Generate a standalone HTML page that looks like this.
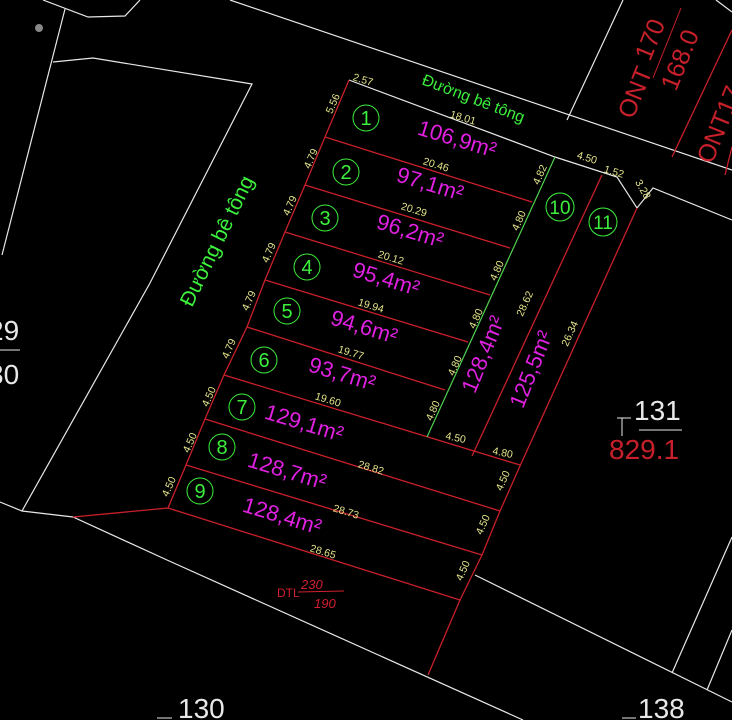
<!DOCTYPE html>
<html><head><meta charset="utf-8"><style>
html,body{margin:0;padding:0;background:#000;width:732px;height:720px;overflow:hidden}
svg{display:block}
text{font-family:"Liberation Sans",sans-serif}
.w{stroke:#e8e8e8;stroke-width:1.2;fill:none}
.r{stroke:#c8202a;stroke-width:1.3;fill:none}
.g{fill:#3cf03c}
.m{fill:#e020e0;font-size:22px}
.y{fill:#e4e48a;font-size:10.5px}
.c{stroke:#3cf03c;stroke-width:1;fill:none}
.n{fill:#3cf03c;font-size:20px;text-anchor:middle}
</style></head><body>
<svg width="732" height="720" viewBox="0 0 732 720" xmlns="http://www.w3.org/2000/svg">
<polyline class="w" points="43,0 88,17 125,16 140,0"/>
<line class="w" x1="65" y1="9" x2="2" y2="255"/>
<circle cx="39" cy="28" r="4" fill="#888"/>
<polyline class="w" points="53,62 93,58 252,84 150,283 22,511"/>
<polyline class="w" points="0,502 22,511 73,517 167,560 523,720"/>
<line class="w" x1="230" y1="0" x2="732" y2="170"/>
<polyline class="w" points="349,80 555,157 617,177 637,208 653,188 732,220"/>
<line class="w" x1="623" y1="0" x2="567" y2="120"/>
<line class="w" x1="475" y1="575" x2="732" y2="702"/>
<line class="w" x1="732" y1="537" x2="672" y2="673"/>
<line class="w" x1="732" y1="630" x2="707" y2="690"/>
<line class="w" x1="716" y1="0" x2="732" y2="12"/>
<polyline class="r" points="349,80 325,137 305,185 285,232 265,280 247,327 224,375 205,419 186,465 168,508 73,517"/>
<line class="r" x1="325" y1="137" x2="532" y2="202"/>
<line class="r" x1="305" y1="185" x2="510" y2="248"/>
<line class="r" x1="285" y1="232" x2="490" y2="295"/>
<line class="r" x1="265" y1="280" x2="468" y2="342"/>
<line class="r" x1="247" y1="327" x2="445" y2="390"/>
<line class="r" x1="224" y1="375" x2="520" y2="465"/>
<line class="r" x1="205" y1="419" x2="500" y2="511"/>
<line class="r" x1="186" y1="465" x2="482" y2="555"/>
<line class="r" x1="168" y1="508" x2="460" y2="600"/>
<line class="r" x1="602" y1="175" x2="472" y2="456"/>
<polyline class="r" points="637,208 520,466 500,511 482,555 460,600 428,675"/>
<line x1="555" y1="157" x2="427" y2="437" stroke="#50d050" stroke-width="1.2"/>
<line class="r" x1="732" y1="30" x2="672" y2="157"/>
<line class="r" x1="732" y1="147" x2="725" y2="175"/>
<g>
<circle class="c" cx="366" cy="118" r="13"/><text class="n" x="366" y="125">1</text>
<circle class="c" cx="346" cy="172" r="13"/><text class="n" x="346" y="179">2</text>
<circle class="c" cx="325" cy="218" r="13"/><text class="n" x="325" y="225">3</text>
<circle class="c" cx="307" cy="267" r="13"/><text class="n" x="307" y="274">4</text>
<circle class="c" cx="287" cy="311" r="13"/><text class="n" x="287" y="318">5</text>
<circle class="c" cx="264" cy="360" r="13"/><text class="n" x="264" y="367">6</text>
<circle class="c" cx="242" cy="407" r="13"/><text class="n" x="242" y="414">7</text>
<circle class="c" cx="222" cy="447" r="13"/><text class="n" x="222" y="454">8</text>
<circle class="c" cx="200" cy="491" r="13"/><text class="n" x="200" y="498">9</text>
<circle class="c" cx="560" cy="207" r="14"/><text class="n" x="560" y="214" style="font-size:19px">10</text>
<circle class="c" cx="603" cy="222" r="14"/><text class="n" x="603" y="229" style="font-size:19px">11</text>
</g>
<g text-anchor="middle">
<text class="m" transform="translate(455,146) rotate(17)">106,9m²</text>
<text class="m" transform="translate(428,191) rotate(17)">97,1m²</text>
<text class="m" transform="translate(408,238) rotate(17)">96,2m²</text>
<text class="m" transform="translate(384,286) rotate(17)">95,4m²</text>
<text class="m" transform="translate(362,334) rotate(17)">94,6m²</text>
<text class="m" transform="translate(340,381) rotate(17)">93,7m²</text>
<text class="m" transform="translate(302,430) rotate(17)">129,1m²</text>
<text class="m" transform="translate(285,478) rotate(17)">128,7m²</text>
<text class="m" transform="translate(280,523) rotate(17)">128,4m²</text>
<text class="m" transform="translate(490,357) rotate(-68)">128,4m²</text>
<text class="m" transform="translate(538,372) rotate(-68)">125,5m²</text>
</g>
<text class="g" style="font-size:16px" transform="translate(421,84) rotate(21)">Đường bê tông</text>
<text class="g" style="font-size:21px" transform="translate(192,308) rotate(-64)">Đường bê tông</text>
<g text-anchor="middle">
<text class="y" transform="translate(362,83) rotate(17)">2.57</text>
<text class="y" transform="translate(462,121) rotate(17)">18.01</text>
<text class="y" transform="translate(435,168) rotate(17)">20.46</text>
<text class="y" transform="translate(413,213) rotate(17)">20.29</text>
<text class="y" transform="translate(390,261) rotate(17)">20.12</text>
<text class="y" transform="translate(370,309) rotate(17)">19.94</text>
<text class="y" transform="translate(350,356) rotate(17)">19.77</text>
<text class="y" transform="translate(327,403) rotate(17)">19.60</text>
<text class="y" transform="translate(370,471) rotate(17)">28.82</text>
<text class="y" transform="translate(345,515) rotate(17)">28.73</text>
<text class="y" transform="translate(322,555) rotate(17)">28.65</text>
<text class="y" transform="translate(455,441) rotate(12)">4.50</text>
<text class="y" transform="translate(502,456) rotate(12)">4.80</text>
<text class="y" transform="translate(586,161) rotate(17)">4.50</text>
<text class="y" transform="translate(613,175) rotate(17)">1.52</text>
<text class="y" transform="translate(640,191) rotate(60)">3.28</text>
<text class="y" transform="translate(336,105) rotate(-66)">5.56</text>
<text class="y" transform="translate(314,160) rotate(-66)">4.79</text>
<text class="y" transform="translate(293,207) rotate(-66)">4.79</text>
<text class="y" transform="translate(272,254) rotate(-66)">4.79</text>
<text class="y" transform="translate(252,302) rotate(-66)">4.79</text>
<text class="y" transform="translate(232,350) rotate(-66)">4.79</text>
<text class="y" transform="translate(212,398) rotate(-66)">4.50</text>
<text class="y" transform="translate(193,444) rotate(-66)">4.50</text>
<text class="y" transform="translate(172,488) rotate(-66)">4.50</text>
<text class="y" transform="translate(543,176) rotate(-66)">4.82</text>
<text class="y" transform="translate(522,222) rotate(-66)">4.80</text>
<text class="y" transform="translate(500,272) rotate(-66)">4.80</text>
<text class="y" transform="translate(479,320) rotate(-66)">4.80</text>
<text class="y" transform="translate(458,367) rotate(-66)">4.80</text>
<text class="y" transform="translate(436,412) rotate(-66)">4.80</text>
<text class="y" transform="translate(528,305) rotate(-66)">28.62</text>
<text class="y" transform="translate(573,335) rotate(-66)">26.34</text>
<text class="y" transform="translate(506,482) rotate(-66)">4.50</text>
<text class="y" transform="translate(486,526) rotate(-66)">4.50</text>
<text class="y" transform="translate(466,572) rotate(-66)">4.50</text>
</g>
<text x="277" y="597" fill="#d02030" style="font-size:12px">DTL</text>
<text x="301" y="589" fill="#d02030" style="font-size:13px;font-style:italic">230</text>
<line x1="298" y1="592" x2="344" y2="591" stroke="#d02030" stroke-width="1"/>
<text x="314" y="608" fill="#d02030" style="font-size:13px;font-style:italic">190</text>
<g fill="#c8202a" style="font-size:25px">
<text transform="translate(633,120) rotate(-68)">ONT</text>
<text transform="translate(650,62) rotate(-68)">170</text>
<text transform="translate(676,92) rotate(-68)">168.0</text>
<text transform="translate(712,165) rotate(-68)">ONT17</text>
</g>
<line x1="653" y1="78" x2="681" y2="8" stroke="#c8202a" stroke-width="1"/>
<g fill="#e8e8e8" style="font-size:28px">
<text x="634" y="420">131</text>
<line x1="639" y1="430" x2="682" y2="430" stroke="#e8e8e8"/>
<line x1="617" y1="418" x2="631" y2="418" stroke="#e8e8e8"/>
<line x1="622" y1="418" x2="622" y2="436" stroke="#e8e8e8"/>
<text x="178" y="718">130</text>
<text x="638" y="718">138</text>
<line x1="157" y1="718" x2="172" y2="718" stroke="#e8e8e8"/>
<line x1="622" y1="718" x2="636" y2="718" stroke="#e8e8e8"/>
<text x="-12" y="340">29</text>
<line x1="0" y1="350" x2="20" y2="350" stroke="#e8e8e8"/>
<text x="-12" y="384">30</text>
</g>
<text x="609" y="459" fill="#c8202a" style="font-size:28px">829.1</text>
</svg>
</body></html>
